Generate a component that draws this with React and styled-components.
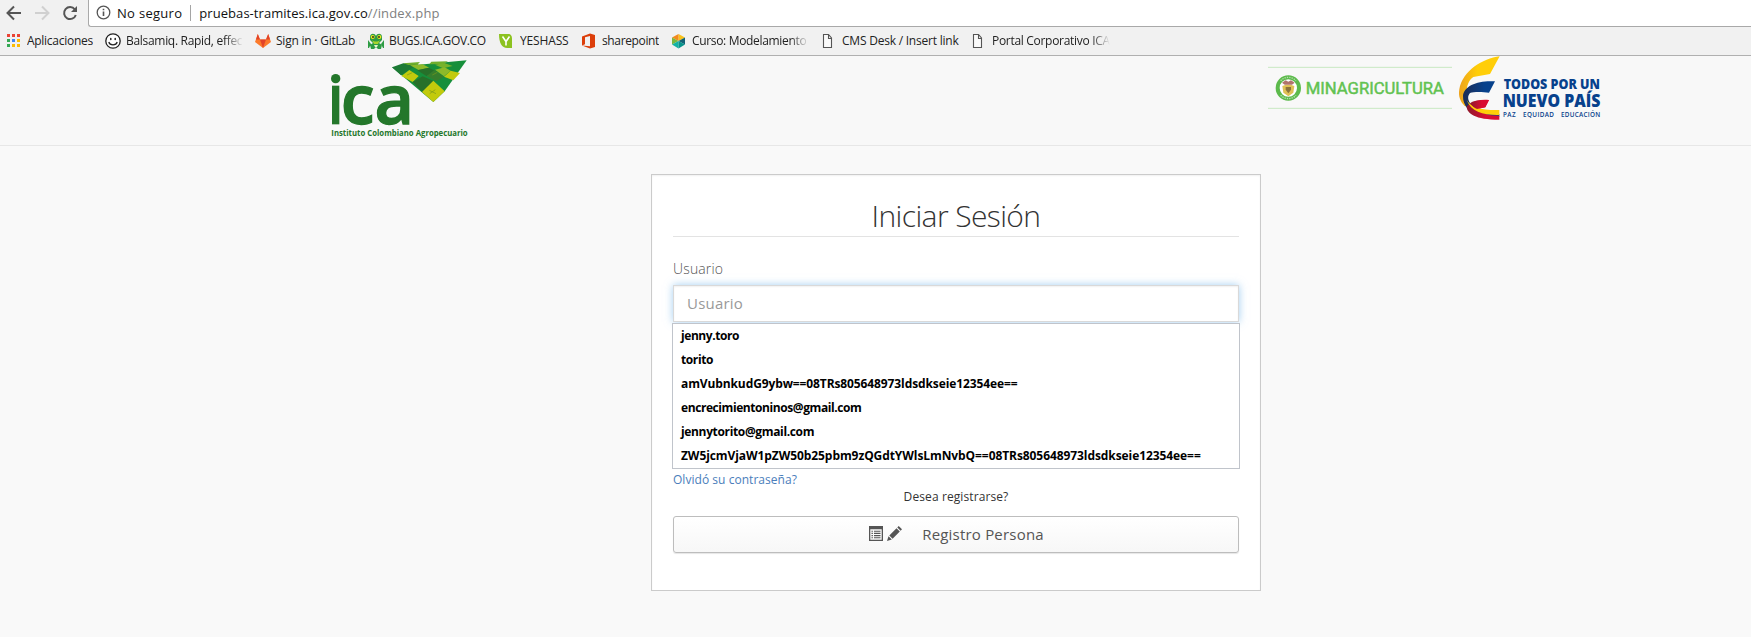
import React from "react";
import styled, { createGlobalStyle } from "styled-components";

const Global = createGlobalStyle`
  * { box-sizing: border-box; }
  body { margin: 0; background: #f9f9f9; font-family: "Open Sans", "Noto Sans", sans-serif; }
`;

const Page = styled.div`
  height: 637px;
  overflow: hidden;
  display: flex;
  flex-direction: column;
`;

const NavBar = styled.div`
  display: flex;
  height: 27px;
  background: #f1f1f1;
`;
const NavButtons = styled.div`
  display: flex;
  width: 88px;
  padding: 5px 0 0 5px;
  gap: 10px;
`;
const AddressBar = styled.div`
  flex: 1;
  display: flex;
  align-items: center;
  height: 27px;
  padding: 0 0 1px 7px;
  background: #fff;
  border: solid #a9a9a9;
  border-width: 0 0 1px 1px;
  border-bottom-left-radius: 3px;
`;
const AddressText = styled.span`
  margin-left: ${(p) => p.$indent || 0}px;
  font-size: 13px;
  line-height: 18px;
  white-space: pre;
  color: ${(p) => p.$color || "#111"};
  letter-spacing: ${(p) => p.$track || 0}px;
`;
const Divider = styled.span`
  width: 1px;
  height: 16px;
  margin: 0 8px;
  background: #a5a5a5;
`;

const Bookmarks = styled.div`
  display: flex;
  align-items: center;
  gap: 12px;
  height: 29px;
  padding-left: 6px;
  background: #f1f1f1;
  border-bottom: 1px solid #b0b0b0;
`;
const Bookmark = styled.div`
  display: flex;
  align-items: center;
  gap: 5px;
`;
const BookmarkText = styled.span`
  width: ${(p) => p.$w}px;
  overflow: hidden;
  white-space: pre;
  font-size: 12px;
  line-height: 18px;
  color: #222;
  letter-spacing: ${(p) => p.$track}px;
  ${(p) => p.$fade && "mask-image: linear-gradient(90deg, #000 84%, transparent 100%);"}
`;

const SiteHeader = styled.header`
  display: flex;
  justify-content: space-between;
  height: 90px;
  padding: 0 144px 0 320px;
  background: #f8f8f8;
  border-bottom: 1px solid #e7e7e7;
`;
const Partners = styled.div`
  display: flex;
`;
const Art = styled.svg`
  display: block;
  flex: none;
  overflow: visible;
  font-family: "Open Sans", sans-serif;
`;

const Card = styled.main`
  width: 610px;
  height: 417px;
  margin: 28px 0 0 651px;
  padding: 21px 21px 0;
  background: #fff;
  border: 1px solid #cbcbcb;
  box-shadow: inset 0 1px 2px rgba(0, 0, 0, 0.06);
`;
const Title = styled.h1`
  height: 41px;
  margin: 0;
  border-bottom: 1px solid #e3e3e3;
  text-align: center;
  font-weight: 300;
  font-size: 30px;
  line-height: 39px;
  letter-spacing: -0.6px;
  color: #333;
`;
const Label = styled.label`
  display: block;
  margin-top: 22px;
  height: 26px;
  font-weight: 300;
  font-size: 14px;
  line-height: 20px;
  letter-spacing: 0.15px;
  color: #555;
`;
const Field = styled.div`
  position: relative;
`;
const Input = styled.div`
  height: 37px;
  padding: 0 13px;
  border: 1px solid #d9d9d9;
  background: #fff;
  box-shadow: inset 0 1px 2px rgba(0, 0, 0, 0.06), 0 0 8px rgba(102, 175, 233, 0.6);
  font-size: 15px;
  line-height: 35px;
  letter-spacing: 0.2px;
  color: #999;
`;
const Suggestions = styled.ul`
  position: absolute;
  top: 38px;
  left: -1px;
  right: -1px;
  height: 146px;
  margin: 0;
  padding: 0 8px;
  list-style: none;
  background: #fff;
  border: 1px solid #c0c4cb;
`;
const Suggestion = styled.li`
  height: 24px;
  font-weight: 700;
  font-size: 12px;
  line-height: 24px;
  color: #000;
  letter-spacing: ${(p) => p.$track}px;
`;
const Forgot = styled.a`
  display: block;
  margin-top: 149px;
  font-size: 12px;
  line-height: 17px;
  letter-spacing: 0.04px;
  color: #4a7ebb;
`;
const Ask = styled.p`
  margin: 0;
  text-align: center;
  font-size: 12px;
  line-height: 17px;
  letter-spacing: 0.1px;
  color: #333;
`;
const Register = styled.button`
  display: flex;
  align-items: center;
  justify-content: center;
  width: 100%;
  height: 37px;
  margin-top: 11px;
  padding: 0 0 2px 1px;
  border: 1px solid #bdbdbd;
  border-radius: 3px;
  background: linear-gradient(#fff, #f7f7f7);
  box-shadow: 0 1px 1px rgba(0, 0, 0, 0.1);
  font-family: inherit;
  font-size: 15px;
  letter-spacing: 0.2px;
  color: #555;
`;
const ButtonIcons = styled.span`
  display: flex;
  gap: 4px;
`;
const RegisterText = styled.span`
  margin-left: 19px;
`;

const Icon = ({ children, w = 16, h = 16 }) => (
  <Art width={w} height={h} viewBox={`0 0 ${w} ${h}`} fill="none">{children}</Art>
);

const AppsIcon = () => (
  <Icon>
    {["#ea4335", "#ea4335", "#ea4335", "#34a853", "#4285f4", "#fbbc05", "#34a853", "#fbbc05", "#fbbc05"].map((c, i) => (
      <rect key={i} x={1 + (i % 3) * 5} y={1 + Math.floor(i / 3) * 5} width="3" height="3" fill={c} />
    ))}
  </Icon>
);
const SmileIcon = () => (
  <Icon>
    <circle cx="8" cy="8" r="7.2" fill="#fff" stroke="#222" strokeWidth="1.3" />
    <ellipse cx="5.8" cy="6" rx=".8" ry="1.2" fill="#222" />
    <ellipse cx="10.2" cy="6" rx=".8" ry="1.2" fill="#222" />
    <path d="M3.8 9c1 3.8 7.400 3.800 8.400 0" stroke="#222" strokeWidth="1.2" />
  </Icon>
);
const GitlabIcon = () => (
  <Icon>
    <path d="M8 15 0 9l2.800-8L5 6.500h6L13.200 1 16 9z" fill="#fc7a2b" />
    <path d="M8 15 5 6.500h6z" fill="#e24329" />
    <path d="M5 6.500 2.800 1 1 6.500zM11 6.500 13.200 1 15 6.500z" fill="#e24329" />
  </Icon>
);
const FrogIcon = () => (
  <Icon>
    <path d="M0 7 3 11 1 15H0zM16 7l-3 4 2 4h1zM2 4c0-4 5-4 6-1 1-3 6-3 6 1v3l-3 3 3 2-1 4h-3l-2-2-2 2H3l-1-4 3-2-3-3z" fill="#2d9c43" />
    <path d="M4 7c2 2 6 2 8 0l-2 4H6z" fill="#a9d42c" />
    <circle cx="4.700" cy="4" r="2" fill="#efe51f" /><circle cx="11.300" cy="4" r="2" fill="#efe51f" />
    <circle cx="5" cy="4" r=".9" fill="#222" /><circle cx="11" cy="4" r=".9" fill="#222" />
    <path d="M6 12h4l-1 2H7z" fill="#e8f3c8" />
  </Icon>
);
const LeafIcon = () => (
  <Icon>
    <path d="M0 1h9c3 0 4 2 4 5v9H8C3 15 0 10 0 1z" fill="#8cc220" />
    <path d="m3.500 3.500 3.500 5 3.500-5M7 8.500v4" stroke="#fff" strokeWidth="1.600" />
  </Icon>
);
const OfficeIcon = () => (
  <Icon>
    <path fillRule="evenodd" d="M1 3.500 9 .5l5 1.500v12l-5 1.500-8-3 8 .8V3L4 4.200v7L1 12.400z" fill="#dc3e0a" />
  </Icon>
);
const HexIcon = () => (
  <Icon>
    <path d="m7.500 1 6.500 3.500L7.500 8z" fill="#f9c21b" /><path d="M7.500 1 1 4.500 7.500 8z" fill="#f28a1c" />
    <path d="M1 4.500v7L7.500 8z" fill="#7cb63c" /><path d="M14 4.500v7L7.500 8z" fill="#136276" />
    <path d="m1 11.500 6.500 4V8z" fill="#12b2a4" /><path d="m14 11.500-6.500 4V8z" fill="#07948c" />
  </Icon>
);
const DocIcon = () => (
  <Icon>
    <path d="M2.500 1.500H7.500L10.500 5v9.500h-8zM7.500 1.500V5.500h3" fill="#fafafa" stroke="#555" strokeWidth="1.100" />
  </Icon>
);

const bookmarks = [
  { icon: AppsIcon, text: "Aplicaciones", w: 66, track: -0.28 },
  { icon: SmileIcon, text: "Balsamiq. Rapid, effec", w: 117, track: -0.3, fade: true },
  { icon: GitlabIcon, text: "Sign in · GitLab", w: 80, track: -0.22 },
  { icon: FrogIcon, text: "BUGS.ICA.GOV.CO", w: 98, track: -0.34 },
  { icon: LeafIcon, text: "YESHASS", w: 49, track: -0.15 },
  { icon: OfficeIcon, text: "sharepoint", w: 57, track: -0.36 },
  { icon: HexIcon, text: "Curso: Modelamiento", w: 117, track: -0.33, fade: true },
  { icon: DocIcon, text: "CMS Desk / Insert link", w: 117, track: -0.22 },
  { icon: DocIcon, text: "Portal Corporativo ICA", w: 118, track: -0.3, fade: true },
];

const suggestions = [
  ["jenny.toro", -0.43],
  ["torito", -0.4],
  ["amVubnkudG9ybw==08TRs805648973ldsdkseie12354ee==", -0.11],
  ["encrecimientoninos@gmail.com", -0.42],
  ["jennytorito@gmail.com", -0.35],
  ["ZW5jcmVjaW1pZW50b25pbm9zQGdtYWlsLmNvbQ==08TRs805648973ldsdkseie12354ee==", -0.08],
];

const IcaLogo = () => (
  <Art width="160" height="86" viewBox="0 18 480 258" fill="#24772b">
    <circle cx="47" cy="86" r="14" />
    <rect x="36" y="107" width="22" height="116" />
    <text x="62" y="222" fontSize="206" fontWeight="600" stroke="#24772b" strokeWidth="4" textLength="220" lengthAdjust="spacingAndGlyphs">ca</text>
    <text x="34" y="257" fontSize="25" fontWeight="700" textLength="409" lengthAdjust="spacingAndGlyphs">Instituto Colombiano Agropecuario</text>
    <path d="M216 52 440 31 374 124 340 156z" fill="#168f3b" />
    <path d="m216 52 34-12 46 3-26 15-27 18z" fill="#1d7a35" />
    <path d="m250 40 50-4-8 8-27 1zm84-5 50-1-16 8-40 1z" fill="#6fae2c" />
    <path d="m270 46 38-3 20 10-32 7z" fill="#8dba2a" />
    <path d="m345 44 28-5 25 9-29 7z" fill="#77b22c" />
    <path d="m244 78 24-18 28 18-18 18z" fill="#c2ca0c" />
    <path d="m292 61 34-8 25 12-32 13z" fill="#27702a" />
    <path d="m320 78 23-18 29 20-23 14z" fill="#377e2c" />
    <path d="m345 59 29-7 18 10-20 17z" fill="#8db92a" />
    <path d="m278 96 30-17 35 15-36 32z" fill="#27702a" />
    <path d="m306 126 34-34 34 32-34 32z" fill="#c2ca0c" />
    <path d="m372 80 20-18 28 7-20 22z" fill="#c2ca0c" />
    <path d="m328 121 20 10m-19 0 17-12M261 75l16-7M337 75l15-8" stroke="#78991b" strokeWidth="2" />
  </Art>
);

const MinistryLogo = () => (
  <Art width="184" height="74" viewBox="24 18 552 222" fill="#61c250">
    <path d="M24 52h552M24 175h552" stroke="#c8e8c2" strokeWidth="3" />
    <circle cx="85" cy="114" r="32" fill="#fff" stroke="#5cba4c" strokeWidth="12" />
    <path d="M62 92A32 32 0 0 1 108 92M62 136A32 32 0 0 0 108 136" fill="none" stroke="#b5e0ac" strokeWidth="4" strokeDasharray="4 3" />
    <path d="M67 108q18-8 36 0l-3 20-15 11-15-11z" fill="#e0c155" />
    <path d="m66 98 11-7 8 4 8-4 11 7-8 6H74z" fill="#b0746c" />
    <path d="M77 111h16v8l-8 11-8-11z" fill="#8c743b" />
    <text x="137" y="133" fontFamily="Roboto, sans-serif" fontSize="52" fontWeight="400" stroke="#61c250" strokeWidth="1.500" textLength="415" lengthAdjust="spacingAndGlyphs">MINAGRICULTURA</text>
  </Art>
);

const CountryLogo = () => (
  <Art width="155" height="74" viewBox="36 18 465 222" fill="#07418c">
    <defs>
      <linearGradient id="gold" x1="0" x2="1"><stop offset="0" stopColor="#eda21d" /><stop offset=".45" stopColor="#ffce08" /></linearGradient>
      <linearGradient id="navy" x1="0" x2="1"><stop offset="0" stopColor="#1c2c55" /><stop offset=".6" stopColor="#07418c" /></linearGradient>
      <linearGradient id="crimson" x1="0" x2="1"><stop offset="0" stopColor="#8e1a2c" /><stop offset=".6" stopColor="#d90d32" /></linearGradient>
    </defs>
    <path d="M179 19C128 26 68 62 58 118c-4 22 4 38 16 50l20 6c-18-24-22-74 6-93l50-9z" fill="url(#gold)" />
    <path d="M165 94c-48-4-94 12-96 44-1 28 20 50 43 58 22 6 45 5 66 4v-8c-42-2-66-8-84-28-12-13-12-26-4-35 14-5 40-3 57-1z" fill="url(#navy)" />
    <path d="M147 150c-30-2-60 6-67 20 1 20 25 39 98 39v-12c-38 0-54-8-66-20l24-5z" fill="url(#crimson)" />
    <path d="M80 150c14 24 44 31 98 30v15c-48 1-84-9-98-45z" fill="#ffce08" />
    <path d="M147 150c-24-2-42 2-56 9 4 9 12 15 20 18l25-5z" fill="url(#crimson)" />
    <text x="191" y="116" fontSize="43" fontWeight="800" textLength="289" lengthAdjust="spacingAndGlyphs">TODOS POR UN</text>
    <text x="188" y="171" fontSize="53" fontWeight="800" textLength="293" lengthAdjust="spacingAndGlyphs">NUEVO PAÍS</text>
    <text x="189" y="200" fontSize="19" fontWeight="600" textLength="38">PAZ</text>
    <text x="249" y="200" fontSize="19" fontWeight="600" textLength="93">EQUIDAD</text>
    <text x="363" y="200" fontSize="19" fontWeight="600" textLength="118">EDUCACIÓN</text>
  </Art>
);

export default function App() {
  return (
    <Page>
      <Global />
      <NavBar>
        <NavButtons>
          <Icon w={18} h={16}><path d="M16 8H3M9 1.500 2.500 8 9 14.500" stroke="#555" strokeWidth="2" /></Icon>
          <Icon w={18} h={16}><path d="M2 8h13M9 1.500 15.500 8 9 14.500" stroke="#d0d0d0" strokeWidth="2" /></Icon>
          <Icon w={18} h={16}>
            <path d="M13.800 4.300A6 6 0 1 0 14.800 10" stroke="#555" strokeWidth="2" />
            <path d="M16 1v6h-6z" fill="#555" />
          </Icon>
        </NavButtons>
        <AddressBar>
          <Icon w={15} h={15}>
            <circle cx="7.500" cy="7.500" r="6.300" stroke="#555" strokeWidth="1.300" />
            <path d="M7.500 6.500v4.500M7.500 3.800v1.500" stroke="#555" strokeWidth="1.600" />
          </Icon>
          <AddressText $track={0.3} $indent={6}>No seguro</AddressText>
          <Divider />
          <AddressText $track={0.05}>pruebas-tramites.ica.gov.co</AddressText>
          <AddressText $track={0.15} $color="#808080">//index.php</AddressText>
        </AddressBar>
      </NavBar>
      <Bookmarks>
        {bookmarks.map(({ icon: Glyph, text, w, track, fade }) => (
          <Bookmark key={text}>
            <Glyph />
            <BookmarkText $w={w} $track={track} $fade={fade}>{text}</BookmarkText>
          </Bookmark>
        ))}
      </Bookmarks>
      <SiteHeader>
        <IcaLogo />
        <Partners>
          <MinistryLogo />
          <CountryLogo />
        </Partners>
      </SiteHeader>
      <Card>
        <Title>Iniciar Sesión</Title>
        <Label>Usuario</Label>
        <Field>
          <Input>Usuario</Input>
          <Suggestions>
            {suggestions.map(([text, track]) => (
              <Suggestion key={text} $track={track}>{text}</Suggestion>
            ))}
          </Suggestions>
        </Field>
        <Forgot>Olvidó su contraseña?</Forgot>
        <Ask>Desea registrarse?</Ask>
        <Register>
          <ButtonIcons>
            <Icon w={14} h={15}>
              <path fillRule="evenodd" d="M0 0h14v15H0zM1.300 3.200v10.500h11.400V3.200z" fill="#555" />
              <path d="M2.500 5.200h1.400M2.500 7.400h1.400M2.500 9.600h1.400M2.500 11.800h1.400M5 5.200h6.500M5 7.400h6.500M5 9.600h6.500M5 11.800h6.500" stroke="#555" strokeWidth="1.100" />
            </Icon>
            <Icon w={16} h={15}>
              <path d="m0 15 1.500-4.800 3.300 3.300zM2.300 9.400l7.200-7.200 3.300 3.300-7.200 7.200zM10.300 1.400 11.700 0 15 3.300l-1.400 1.400z" fill="#555" />
            </Icon>
          </ButtonIcons>
          <RegisterText>Registro Persona</RegisterText>
        </Register>
      </Card>
    </Page>
  );
}
